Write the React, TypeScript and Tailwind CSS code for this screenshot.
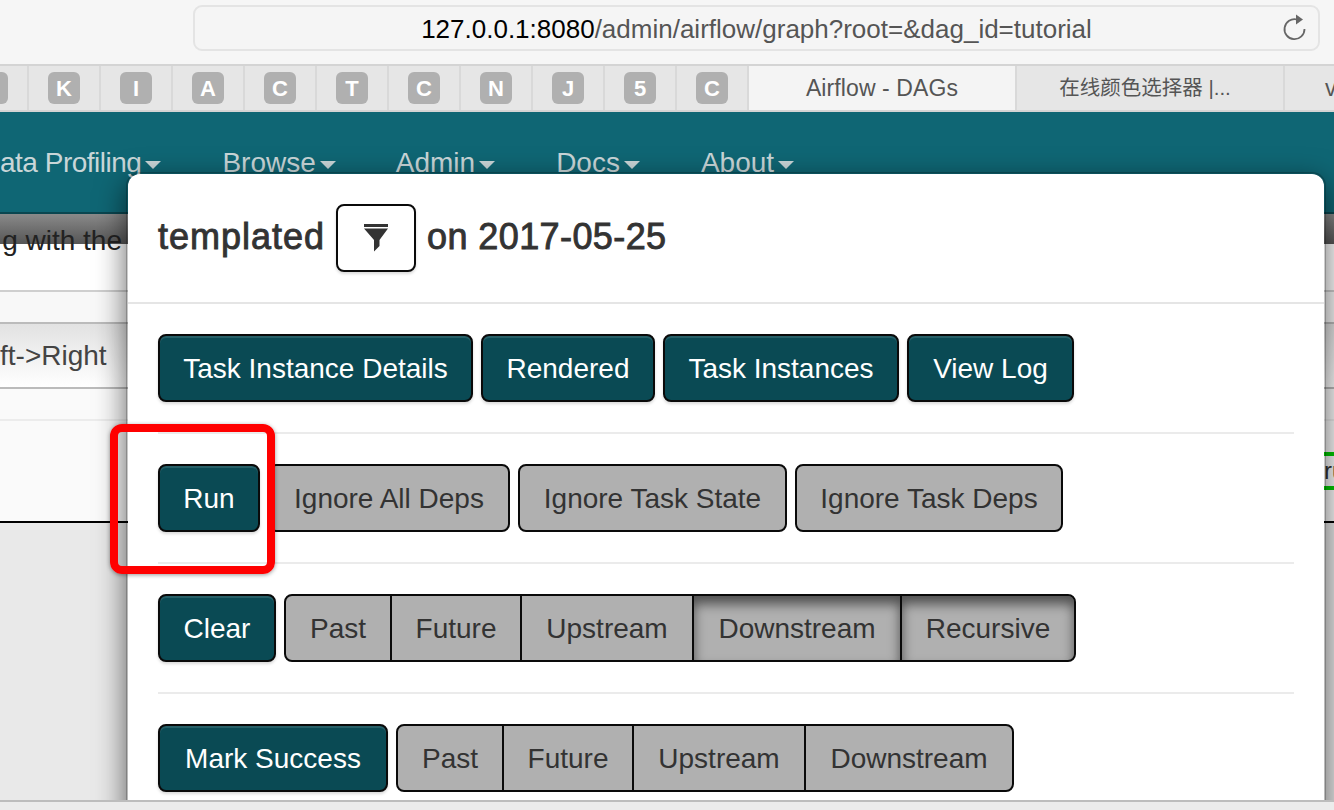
import React from 'react';
import clsx from 'clsx';

const favicons = ['K', 'I', 'A', 'C', 'T', 'C', 'N', 'J', '5', 'C'];
const navItems = [
  { label: 'Browse', cls: 'ml-[61px]' },
  { label: 'Admin', cls: 'ml-[60px]' },
  { label: 'Docs', cls: 'ml-[61px]' },
  { label: 'About', cls: 'ml-[61px]' },
];

const groupWidths: Record<string, string> = {
  Past: 'w-[108px]',
  Future: 'w-[132px]',
  Upstream: 'w-[174px]',
  Downstream: 'w-[210px]',
  Recursive: 'w-[176px]',
};

function Caret() {
  return <span className="ml-[4px] inline-block h-0 w-0 border-x-[8px] border-t-[8px] border-x-transparent border-t-[#c9d6d8] align-middle" />;
}

function PrimaryButton({ children, className }: { children: React.ReactNode; className?: string }) {
  return (
    <button
      className={clsx(
        'h-[68px] rounded-[8px] border-2 border-[#0a0a0a] bg-[#0a4a54] pt-[2px] text-[28px] text-white shadow-[inset_0_2px_0_rgba(255,255,255,0.12),0_2px_3px_rgba(0,0,0,0.15)]',
        className,
      )}
    >
      {children}
    </button>
  );
}

function GreyButton({ children, active, className }: { children: React.ReactNode; active?: boolean; className?: string }) {
  return (
    <button
      className={clsx(
        'h-[68px] border-2 border-[#0a0a0a] bg-[#b0b0b0] pt-[2px] text-[28px] text-[#333]',
        active && 'shadow-[inset_0_8px_12px_rgba(0,0,0,0.55)]',
        className,
      )}
    >
      {children}
    </button>
  );
}

function Group({ items, active = [] }: { items: string[]; active?: string[] }) {
  return (
    <div className="flex">
      {items.map((item, i) => (
        <GreyButton
          key={item}
          active={active.includes(item)}
          className={clsx(groupWidths[item], i === 0 && 'rounded-l-[8px]', i > 0 && '-ml-[2px]', i === items.length - 1 && 'rounded-r-[8px]')}
        >
          {item}
        </GreyButton>
      ))}
    </div>
  );
}

function Divider() {
  return <div className="my-[30px] h-[2px] bg-[#ebebeb]" />;
}

export default function App() {
  return (
    <div className="flex h-[810px] w-[1334px] flex-col overflow-hidden bg-white font-['Liberation_Sans','Noto_Sans_CJK_SC',sans-serif]">
      {/* browser toolbar */}
      <div className="flex h-[64px] shrink-0 items-start bg-[#f6f6f6] pl-[193px] pt-[5px]">
        <div className="relative flex h-[46px] w-[1127px] items-center justify-center rounded-[9px] border-2 border-[#e4e4e4] bg-[#f5f5f5] pt-[2px] text-[26px] text-[#555]">
          <span className="text-black">127.0.0.1:8080</span>
          <span>/admin/airflow/graph?root=&amp;dag_id=tutorial</span>
          <svg className="absolute left-[1087px] top-[7px]" width="26" height="28" viewBox="0 0 26 28" fill="none">
            <path d="M15 5.5 A10 10 0 1 0 22.5 15" stroke="#666" strokeWidth="1.8" />
            <path d="M14 0.5 L21 5.5 L14 10.5 Z" fill="#666" />
          </svg>
        </div>
      </div>

      {/* tabs */}
      <div className="flex h-[48px] shrink-0 border-y-2 border-[#d4d4d4] bg-[#e6e6e6]">
        <div className="flex w-[29px] shrink-0 items-center border-r-2 border-[#d9d9d9]">
          <div className="ml-[-24px] h-[32px] w-[32px] rounded-[6px] bg-[#b0b0b0]" />
        </div>
        {favicons.map((letter, i) => (
          <div key={i} className="flex w-[72px] shrink-0 items-center justify-center border-r-2 border-[#d9d9d9]">
            <div className="flex h-[32px] w-[32px] items-center justify-center rounded-[6px] bg-[#b0b0b0] text-[22px] font-bold text-white">{letter}</div>
          </div>
        ))}
        <div className="flex w-[268px] shrink-0 items-center justify-center border-r-2 border-[#d9d9d9] bg-[#f4f4f4] text-[23px] tracking-[0.1px] text-[#555]">Airflow - DAGs</div>
        <div className="flex w-[268px] shrink-0 items-center justify-center border-r-2 border-[#d9d9d9] pr-[10px] text-[20.5px] text-[#555]">在线颜色选择器 |...</div>
        <div className="flex flex-1 items-center pl-[40px] text-[23px] text-[#555]">v</div>
      </div>

      {/* page below the tabs, the modal lies over it */}
      <div className="relative min-h-0 flex-1 overflow-hidden bg-[#e9e9e9]">
        <div className="flex h-[100px] items-start bg-[#0f6674] pt-[35px] text-[28px] leading-[32px] text-[#c9d6d8]">
          <div className="whitespace-nowrap"><span className="tracking-[-0.5px]">ata Profiling</span><Caret /></div>
          {navItems.map((item) => (
            <div key={item.label} className={clsx(item.cls, 'whitespace-nowrap')}>{item.label}<Caret /></div>
          ))}
        </div>
        <div className="h-[32px] border-t-2 border-[#0a4650] bg-gradient-to-b from-[#8a8a8a] to-[#565656]" />
        <div className="flow-root h-[48px] border-b-2 border-[#cfcfcf] bg-white">
          <div className="relative -mt-[19px] flex w-[122px] justify-end whitespace-nowrap text-[28px] leading-[32px] text-[#222]">g with the</div>
        </div>
        <div className="h-[32px] border-b-2 border-[#bbb] bg-[#f8f8f8]" />
        <div className="flex h-[65px] items-center border-b-2 border-[#bbb] bg-gradient-to-b from-[#e2e2e2] to-white">
          <div className="whitespace-nowrap text-[28px] text-[#444]">ft-&gt;Right</div>
        </div>
        <div className="h-[32px] border-b-2 border-[#ececec] bg-[#fafafa]" />
        <div className="flex h-[102px] items-center justify-end border-b-2 border-black bg-[#fafafa]">
          <div className="flex h-[38px] w-[10px] items-center overflow-hidden border-y-4 border-[#00cc00] text-[24px] text-[#333]">ru</div>
        </div>

        {/* task modal */}
        <div className="absolute left-[126px] top-[60px] h-[700px] w-[1200px] rounded-[14px] border-2 border-[#00000033] bg-white bg-clip-padding shadow-[0_10px_30px_rgba(0,0,0,0.6)]">
          <div className="flex h-[130px] items-center gap-[11px] border-b-2 border-[#e5e5e5] px-[30px] text-[36px] text-[#333] [-webkit-text-stroke:0.9px_#333]">
            <span className="-mt-[2px] tracking-[1px]">templated</span>
            <button className="flex h-[68px] w-[80px] items-center justify-center rounded-[8px] border-2 border-[#0a0a0a] bg-white shadow-[0_2px_3px_rgba(0,0,0,0.15)]">
              <svg width="24" height="28" viewBox="0 0 24 28">
                <rect x="0" y="0" width="24" height="3" fill="#333" />
                <path d="M0 4.5 H24 L15.5 16 V22 L10 27.5 V16 Z" fill="#333" />
              </svg>
            </button>
            <span className="-mt-[2px] tracking-[0.4px]">on 2017-05-25</span>
          </div>
          <div className="p-[30px]">
            <div className="flex gap-[8px]">
              <PrimaryButton className="w-[315px]">Task Instance Details</PrimaryButton>
              <PrimaryButton className="w-[174px]">Rendered</PrimaryButton>
              <PrimaryButton className="w-[236px]">Task Instances</PrimaryButton>
              <PrimaryButton className="w-[167px]">View Log</PrimaryButton>
            </div>
            <Divider />
            <div className="flex gap-[8px]">
              <PrimaryButton className="w-[102px]">Run</PrimaryButton>
              <GreyButton className="w-[242px] rounded-[8px]">Ignore All Deps</GreyButton>
              <GreyButton className="w-[269px] rounded-[8px]">Ignore Task State</GreyButton>
              <GreyButton className="w-[268px] rounded-[8px]">Ignore Task Deps</GreyButton>
            </div>
            <Divider />
            <div className="flex gap-[8px]">
              <PrimaryButton className="w-[118px]">Clear</PrimaryButton>
              <Group items={['Past', 'Future', 'Upstream', 'Downstream', 'Recursive']} active={['Downstream', 'Recursive']} />
            </div>
            <Divider />
            <div className="flex gap-[8px]">
              <PrimaryButton className="w-[230px]">Mark Success</PrimaryButton>
              <Group items={['Past', 'Future', 'Upstream', 'Downstream']} />
            </div>
          </div>
        </div>

        {/* annotation drawn on the screenshot */}
        <div className="absolute left-[110px] top-[312px] h-[150px] w-[165px] rounded-[12px] border-[8px] border-[#ff0000] shadow-[0_1px_4px_rgba(0,0,0,0.4)]" />
      </div>

      {/* status bar */}
      <div className="h-[10px] shrink-0 border-t-2 border-[#bdbdbd] bg-[#ececec]" />
    </div>
  );
}
